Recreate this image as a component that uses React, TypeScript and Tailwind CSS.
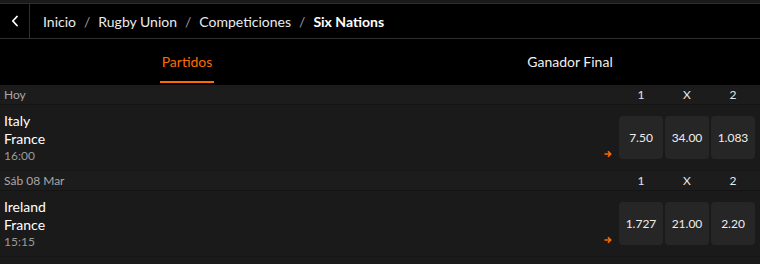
import React from 'react';

type Match = { home: string; away: string; time: string; odds: [string, string, string] };

const sections: { day: string; matches: Match[] }[] = [
  { day: 'Hoy', matches: [{ home: 'Italy', away: 'France', time: '16:00', odds: ['7.50', '34.00', '1.083'] }] },
  { day: 'Sáb 08 Mar', matches: [{ home: 'Ireland', away: 'France', time: '15:15', odds: ['1.727', '21.00', '2.20'] }] },
];

function ArrowIcon() {
  return (
    <svg width="8" height="8" viewBox="0 0 8 8" className="text-[#ff6a00]">
      <path d="M0.5 4h6M4 1.3 6.7 4 4 6.7" fill="none" stroke="currentColor" strokeWidth="1.6" />
    </svg>
  );
}

export default function App() {
  return (
    <div className="w-[760px] h-[264px] overflow-hidden bg-[#1a1a1a] text-white font-['Lato',sans-serif]">
      {/* breadcrumb */}
      <div className="mt-[3px] h-[36px] flex items-stretch bg-black border-t border-b border-[#2e2e2e]">
        <div className="w-[30px] flex items-center justify-center border-r border-[#2e2e2e]">
          <svg width="8" height="12" viewBox="0 0 8 12">
            <path d="M6 1.5 1.8 6 6 10.5" fill="none" stroke="white" strokeWidth="1.8" strokeLinecap="round" strokeLinejoin="round" />
          </svg>
        </div>
        <div className="flex items-center pl-[13px] text-[14px] text-[#ececec] gap-[8px]">
          <span>Inicio</span>
          <span className="text-[#9a9a9a]">/</span>
          <span>Rugby Union</span>
          <span className="text-[#9a9a9a]">/</span>
          <span>Competiciones</span>
          <span className="text-[#9a9a9a]">/</span>
          <span className="font-bold text-white">Six Nations</span>
        </div>
      </div>

      {/* tabs */}
      <div className="h-[46px] flex bg-black text-[14px]">
        <div className="flex-1 flex justify-center">
          <div className="relative flex items-center px-[2px] pb-[2px] text-[#ff6a00] -translate-x-[3px]">
            Partidos
            <span className="absolute left-0 right-0 bottom-[2px] h-[2px] bg-[#ff6a00]" />
          </div>
        </div>
        <div className="flex-1 flex items-center justify-center pb-[2px] text-[#f0f0f0]">Ganador Final</div>
      </div>

      {sections.map((s) => (
        <div key={s.day}>
          <div className="h-[20px] flex items-center bg-[#1c1c1c] border-b border-[#141414] pl-[4px] pr-[5px] text-[12px]">
            <span className="flex-1 text-[#a8a8a8]">{s.day}</span>
            <div className="flex gap-[2px] text-[#e6e6e6]">
              <span className="w-[44px] text-center">1</span>
              <span className="w-[44px] text-center">X</span>
              <span className="w-[44px] text-center">2</span>
            </div>
          </div>
          {s.matches.map((m) => (
            <div key={m.home} className="h-[66px] flex items-center bg-[#1a1a1a] pl-[4px] pr-[5px] border-b border-[#161616]">
              <div className="flex-1 flex flex-col leading-[18px]">
                <span className="text-[14px] text-white">{m.home}</span>
                <span className="text-[14px] text-white">{m.away}</span>
                <span className="text-[12px] leading-[16px] text-[#9a9a9a]">{m.time}</span>
              </div>
              <div className="self-end mb-[12px] mr-[7px]">
                <ArrowIcon />
              </div>
              <div className="flex gap-[2px]">
                {m.odds.map((o, i) => (
                  <div key={i} className="w-[44px] h-[43px] rounded-[4px] bg-[#262626] flex items-center justify-center text-[12px] text-[#eeeeee]">
                    {o}
                  </div>
                ))}
              </div>
            </div>
          ))}
        </div>
      ))}
    </div>
  );
}
